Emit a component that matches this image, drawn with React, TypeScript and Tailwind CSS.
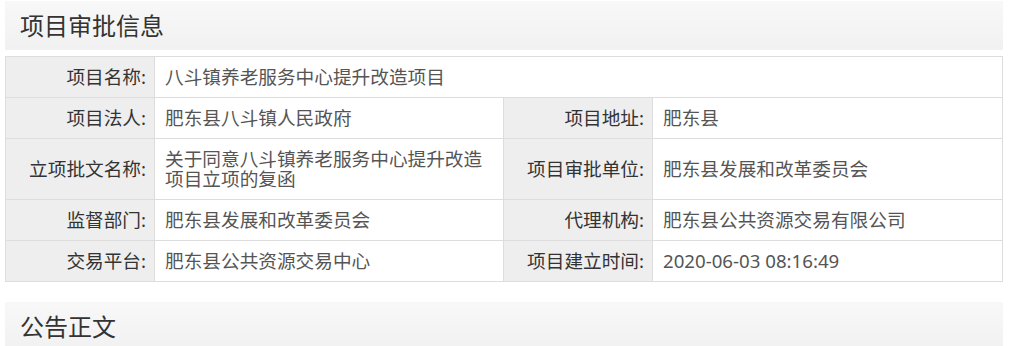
import React from "react";

const rows: { label: string; value: string; label2?: string; value2?: string }[] = [
  { label: "项目名称:", value: "八斗镇养老服务中心提升改造项目" },
  { label: "项目法人:", value: "肥东县八斗镇人民政府", label2: "项目地址:", value2: "肥东县" },
  {
    label: "立项批文名称:",
    value: "关于同意八斗镇养老服务中心提升改造项目立项的复函",
    label2: "项目审批单位:",
    value2: "肥东县发展和改革委员会",
  },
  { label: "监督部门:", value: "肥东县发展和改革委员会", label2: "代理机构:", value2: "肥东县公共资源交易有限公司" },
  { label: "交易平台:", value: "肥东县公共资源交易中心", label2: "项目建立时间:", value2: "2020-06-03 08:16:49" },
];

const SectionTitle: React.FC<{ title: string }> = ({ title }) => (
  <div className="h-[49px] bg-gradient-to-b from-[#f8f8f8] to-[#f1f1f1] flex items-center pl-[15px]">
    <h2 className="text-[24px] leading-none text-[#333]">{title}</h2>
  </div>
);

// 14pt text, like the source page
const labelCls =
  "bg-[#eeeeee] border border-[#dddddd] text-right pr-[8px] pl-2 py-[10px] text-[#333] align-middle";
const valueCls = "border border-[#dddddd] pl-[10px] pr-2 py-[10px] text-[#555] align-middle";

export default function App() {
  return (
    <div
      className="bg-white w-[1012px] h-[346px] overflow-hidden pt-px pl-[5px] pr-[9px] text-[18.67px] leading-[20px]"
      style={{ fontFamily: '"Noto Sans", "Noto Sans CJK SC", sans-serif' }}
    >
      <SectionTitle title="项目审批信息" />
      <table className="w-[998px] mt-[6px] border-collapse table-fixed">
        <colgroup>
          <col className="w-[149px]" />
          <col className="w-[349px]" />
          <col className="w-[149px]" />
          <col />
        </colgroup>
        <tbody>
          {rows.map((r) => (
            <tr key={r.label}>
              <td className={labelCls}>{r.label}</td>
              {r.label2 ? (
                <>
                  <td className={valueCls}>{r.value}</td>
                  <td className={labelCls}>{r.label2}</td>
                  <td className={valueCls}>{r.value2}</td>
                </>
              ) : (
                <td className={valueCls} colSpan={3}>
                  {r.value}
                </td>
              )}
            </tr>
          ))}
        </tbody>
      </table>
      <div className="mt-[20px]">
        <SectionTitle title="公告正文" />
      </div>
    </div>
  );
}
